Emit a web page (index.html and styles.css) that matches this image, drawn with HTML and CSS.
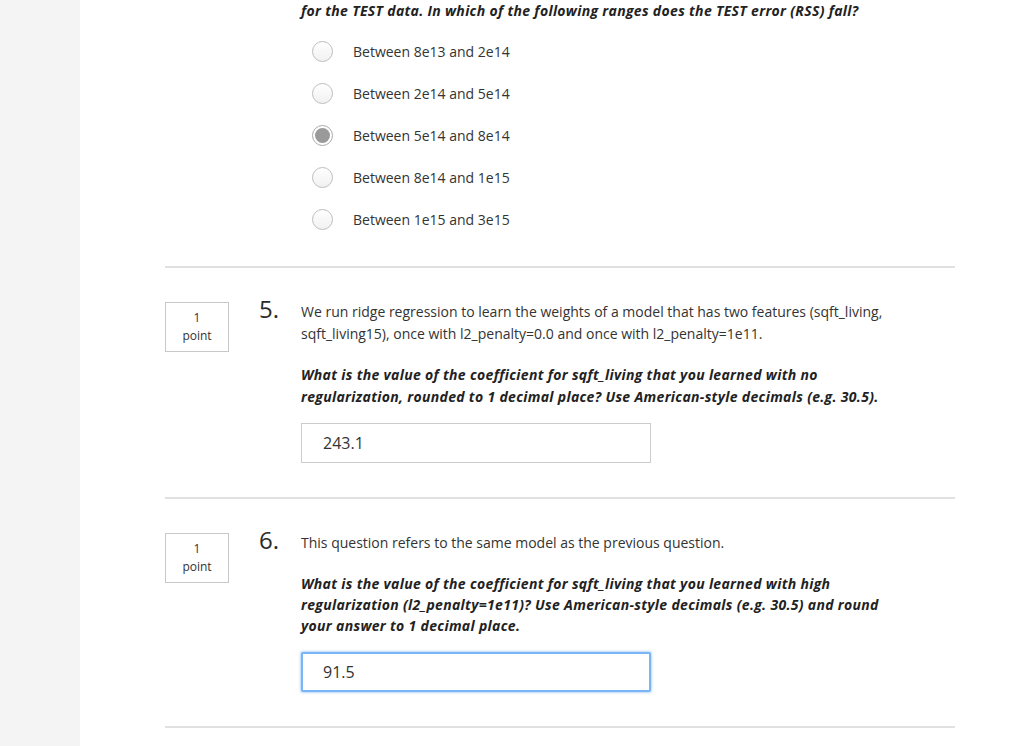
FILE: index.html
```html
<!DOCTYPE html>
<html lang="en">
<head>
<meta charset="utf-8">
<title>Quiz</title>
<link rel="stylesheet" href="styles.css">
</head>
<body>
<div class="page">
  <aside class="sidebar"></aside>
  <main class="main">
    <section class="question partial">
      <div class="qbody">
        <p class="prompt">for the TEST data. In which of the following ranges does the TEST error (RSS) fall?</p>
        <ul class="options">
          <li class="option"><span class="radio"></span><span class="label">Between 8e13 and 2e14</span></li>
          <li class="option"><span class="radio"></span><span class="label">Between 2e14 and 5e14</span></li>
          <li class="option"><span class="radio checked"></span><span class="label">Between 5e14 and 8e14</span></li>
          <li class="option"><span class="radio"></span><span class="label">Between 8e14 and 1e15</span></li>
          <li class="option"><span class="radio"></span><span class="label">Between 1e15 and 3e15</span></li>
        </ul>
      </div>
    </section>

    <section class="question">
      <div class="points">1<br>point</div>
      <div class="qnum">5.</div>
      <div class="qbody">
        <p class="text">We run ridge regression to learn the weights of a model that has two features (sqft_living, sqft_living15), once with l2_penalty=0.0 and once with l2_penalty=1e11.</p>
        <p class="prompt spaced">What is the value of the coefficient for sqft_living that you learned with no regularization, rounded to 1 decimal place? Use American-style decimals (e.g. 30.5).</p>
        <input class="answer" type="text" value="243.1">
      </div>
    </section>

    <section class="question">
      <div class="points">1<br>point</div>
      <div class="qnum">6.</div>
      <div class="qbody">
        <p class="text">This question refers to the same model as the previous question.</p>
        <p class="prompt spaced">What is the value of the coefficient for sqft_living that you learned with high regularization (l2_penalty=1e11)? Use American-style decimals (e.g. 30.5) and round your answer to 1 decimal place.</p>
        <input class="answer focused" type="text" value="91.5">
      </div>
    </section>
  </main>
</div>
</body>
</html>
```

FILE: styles.css
```css
* { box-sizing: border-box; }

html, body {
  margin: 0;
  padding: 0;
  background: #ffffff;
}

body {
  font-family: "Open Sans", "Liberation Sans", sans-serif;
  font-size: 14px;
  color: #333333;
  overflow: hidden;
}

.page {
  display: flex;
  min-height: 746px;
}

.sidebar {
  width: 80px;
  flex: 0 0 80px;
  background: #f4f4f4;
}

.main {
  padding-left: 85px;
  width: 875px;
}

.question {
  display: grid;
  grid-template-columns: 94px 42px 605px;
  align-items: start;
  padding: 33px 0 34px;
  border-bottom: 2px solid #e0e0e0;
  width: 790px;
}

.question.partial {
  padding: 0 0 26px;
}

.question.partial .qbody {
  grid-column: 3;
}

.points {
  width: 64px;
  height: 50px;
  margin-top: 1px;
  border: 1px solid #c8c8c8;
  text-align: center;
  font-size: 12px;
  line-height: 18px;
  padding-top: 6px;
  color: #333333;
}

.qnum {
  font-size: 24px;
  line-height: 22px;
  margin-top: -3px;
  color: #2b2b2b;
}

.qbody p {
  margin: 0;
}

.text {
  line-height: 22px;
}

.prompt {
  font-weight: 700;
  font-style: italic;
  line-height: 21.3px;
  letter-spacing: 0.32px;
  color: #222222;
}

.prompt.spaced {
  margin-top: 19px;
}

.options {
  list-style: none;
  margin: 9px 0 0;
  padding: 0 0 0 11px;
}

.option {
  display: flex;
  align-items: center;
  height: 42px;
}

.radio {
  width: 21px;
  height: 21px;
  flex: 0 0 21px;
  border-radius: 50%;
  border: 1px solid #bdbdbd;
  background: linear-gradient(#ffffff, #f1f1f1);
  margin-right: 20px;
  display: flex;
  align-items: center;
  justify-content: center;
}

.radio.checked {
  border-color: #a9a9a9;
  background: #ffffff;
}

.radio.checked::after {
  content: "";
  width: 15px;
  height: 15px;
  border-radius: 50%;
  background: #9a9a9a;
}

.label {
  color: #333333;
}

.answer {
  display: block;
  margin-top: 15.7px;
  width: 350px;
  height: 40px;
  border: 1px solid #cccccc;
  border-radius: 0;
  padding: 0 0 0 21px;
  font-family: "Open Sans", "Liberation Sans", sans-serif;
  font-size: 16px;
  color: #333333;
  background: #ffffff;
  outline: none;
}

.answer.focused {
  border: 2px solid #7ab6f6;
  border-radius: 2px;
  padding-left: 20px;
  box-shadow: 0 0 2px 1px rgba(120, 180, 250, 0.5);
}
```
